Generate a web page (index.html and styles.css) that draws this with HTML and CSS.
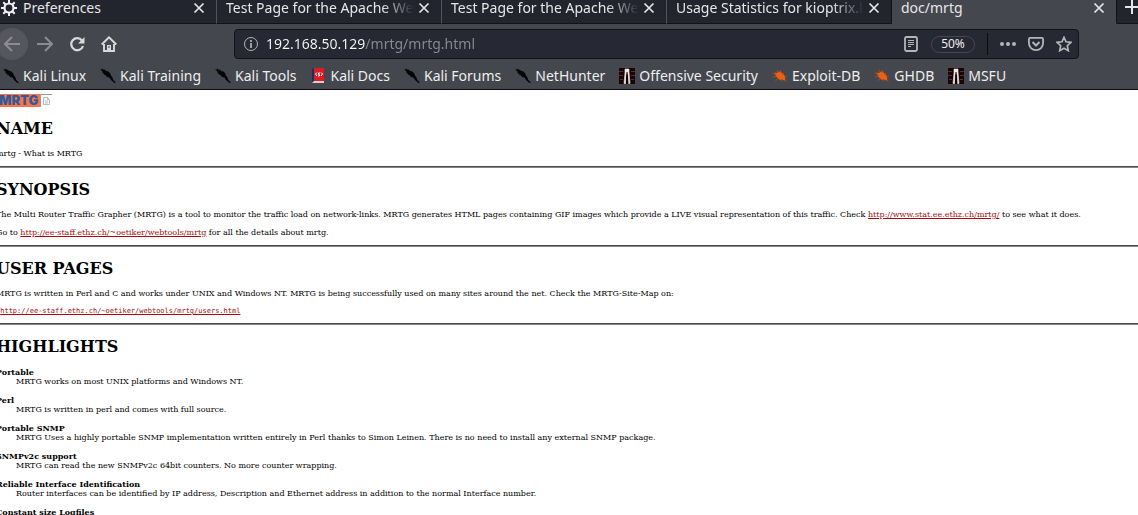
FILE: index.html
```html
<!DOCTYPE html>
<html lang="en">
<head>
<meta charset="utf-8">
<title>doc/mrtg</title>
<link rel="stylesheet" href="styles.css">
</head>
<body>
<svg class="defs" aria-hidden="true">
  <symbol id="close" viewBox="0 0 12 12"><path d="M1.500 1.500l9 9M10.500 1.500l-9 9" stroke="currentColor" stroke-width="1.700" fill="none"/></symbol>
  <symbol id="dragon" viewBox="0 0 16 16"><path d="M0 1l2 .5L2.500.5 4 2l1-.5L6 3l2 .3 2 1.700 1 2.500 1.500 2 .5 2 3 3.500h-1.500L11 12 9.500 9.500 7 9 5.500 7H4L4.500 6 2 5l1-.8z" fill="#050505"/></symbol>
  <symbol id="bug" viewBox="0 0 16 16"><path d="M2.500 4.500L5 5l1.500-1.500L9 4l2 2 1.500 1.500L13.500 11l-1 1.500-2.500-1-2 .5-2.500-2L4 8z" fill="#ee5f12"/><path d="M4.500 2l2 2.500M.5 5l4 1.500M1 9l4-.5M3.500 12.500l3-2M8.500 2v3M12 5l-2 2M12 12l2.500 1.500M9 11l.5 2.500M12.500 8l2.500.5" stroke="#c25418" stroke-width=".7" fill="none"/></symbol>
  <symbol id="offsec" viewBox="0 0 16 16"><path d="M0 0h16v16H0z" fill="#1a0405"/><path d="M0 3.500h4M0 7.500h4M12 3.500h4M12 7.500h4M1 11.500h3M12 11.500h3" stroke="#4e3435" stroke-width="1"/><path d="M6 1h4v3l1 11.500H9.500L9 6H7l-.2 9.500H5L6 5z" fill="#f1e8e4" stroke="#f1e8e4" stroke-width=".6"/><path d="M7.500 4h1l.7 11.500H7z" fill="#050505"/></symbol>
</svg>
<header class="browser">
  <div class="tabs" role="tablist">
    <div class="tab tab-first" role="tab">
      <svg class="gear" viewBox="0 0 16 16" fill="none" stroke="#f2f2f2"><circle cx="8" cy="8" r="4.500" stroke-width="2.200"/><path d="M8 0v3M8 13v3M0 8h3M13 8h3M2.300 2.300l2.200 2.200M11.500 11.500l2.200 2.200M13.700 2.300l-2.200 2.200M4.500 11.500l-2.200 2.200" stroke-width="2"/></svg>
      <span class="title">Preferences</span><button class="close" aria-label="Close tab"><svg><use href="#close"/></svg></button>
    </div>
    <div class="tab" role="tab"><span class="title fade">Test Page for the Apache Web Server</span><button class="close" aria-label="Close tab"><svg><use href="#close"/></svg></button></div>
    <div class="tab" role="tab"><span class="title fade">Test Page for the Apache Web Server</span><button class="close" aria-label="Close tab"><svg><use href="#close"/></svg></button></div>
    <div class="tab" role="tab"><span class="title fade">Usage Statistics for kioptrix.level1</span><button class="close" aria-label="Close tab"><svg><use href="#close"/></svg></button></div>
    <div class="tab active" role="tab" aria-selected="true"><span class="title">doc/mrtg</span><button class="close" aria-label="Close tab"><svg><use href="#close"/></svg></button></div>
    <button class="new-tab" aria-label="New tab"><svg viewBox="0 0 14 14"><path d="M7 0v14M0 7h14" stroke="currentColor" stroke-width="2"/></svg></button>
  </div>
  <nav class="toolbar" aria-label="Navigation">
    <div class="nav-buttons">
      <button class="back" aria-label="Back"><svg viewBox="0 0 16 16"><path d="M16 8H1M8 1L1 8l7 7"/></svg></button>
      <button class="dim" aria-label="Forward"><svg viewBox="0 0 16 16"><path d="M0 8h15M8 1l7 7-7 7"/></svg></button>
      <button aria-label="Reload"><svg viewBox="0 0 16 16"><path d="M13 4.500A6 6 0 1 0 14 10" stroke-width="2.200"/><path d="M15.500 1v6.500H9z" fill="currentColor" stroke="none"/></svg></button>
      <button aria-label="Home"><svg viewBox="0 0 16 16"><path d="M.7 8.500L8 1.300l7.300 7.200M3 8v7h10V8" stroke-width="1.900"/><path d="M6 9h4v6H6z" fill="currentColor" stroke="none"/><path d="M8 10v2" stroke="#44474d" stroke-width="1"/></svg></button>
    </div>
    <div class="urlbar">
      <svg class="info" viewBox="0 0 16 16"><circle cx="8" cy="8" r="6.500"/><path d="M8 7v5M8 4v2" stroke-width="1.700"/></svg>
      <input class="url" type="text" aria-label="Address" value="192.168.50.129/mrtg/mrtg.html">
      <button aria-label="Reader view"><svg viewBox="0 0 16 16"><rect x="2" y="1" width="12" height="14" rx="1.500" stroke-width="1.800"/><path d="M5 4.500h6M5 6.500h6M5 8.500h6M5 10.500h3" stroke-width="1"/></svg></button>
      <button class="zoom">50%</button>
      <span class="divider"></span>
      <button aria-label="Page actions"><svg viewBox="0 0 16 16"><g fill="currentColor" stroke="none"><circle cx="2" cy="8" r="2"/><circle cx="8" cy="8" r="2"/><circle cx="14" cy="8" r="2"/></g></svg></button>
      <button aria-label="Save to Pocket"><svg viewBox="0 0 16 16"><path d="M2.200 1.900h11.600q1.300 0 1.300 1.300V7a7.100 7.100 0 0 1-14.200 0V3.200q0-1.300 1.300-1.300z" stroke-width="1.800"/><path d="M4.500 6L8 9.500 11.500 6" stroke-width="2"/></svg></button>
      <button aria-label="Bookmark"><svg viewBox="0 0 16 16"><path d="M8 1.300l2 4.500 5 .5-3.700 3.400 1 5L8 12.200l-4.300 2.500 1-5L1 6.300l5-.5z" stroke-width="1.700"/></svg></button>
    </div>
  </nav>
  <div class="bookmarks">
    <a href="#"><svg><use href="#dragon"/></svg>Kali Linux</a>
    <a href="#"><svg><use href="#dragon"/></svg>Kali Training</a>
    <a href="#"><svg><use href="#dragon"/></svg>Kali Tools</a>
    <a href="#"><svg viewBox="0 0 16 16"><path d="M2 1l2-1v13l-2 2z" fill="#143260"/><path d="M4 0h10v13H4z" fill="#dc1c20"/><path d="M2 15l2-2h10v2z" fill="#d8d0d0"/><path d="M7 4.500L5.500 6 7 8M11 4.500L12.500 6 11 8M10 5H8.500v1.500h1V8H8" stroke="#fff" stroke-width="1" fill="none"/></svg>Kali Docs</a>
    <a href="#"><svg><use href="#dragon"/></svg>Kali Forums</a>
    <a href="#"><svg><use href="#dragon"/></svg>NetHunter</a>
    <a href="#"><svg><use href="#offsec"/></svg>Offensive Security</a>
    <a href="#"><svg><use href="#bug"/></svg>Exploit-DB</a>
    <a href="#"><svg><use href="#bug"/></svg>GHDB</a>
    <a href="#"><svg><use href="#offsec"/></svg>MSFU</a>
  </div>
</header>
<main class="page">
  <div class="banner"><span class="logo">MRTG</span><svg class="broken" viewBox="0 0 12 13"><path d="M.5 13V.5H12" stroke="#999" fill="none"/><path d="M3.500 3.500h4l2 2v5h-6zM5 7h3M5 9h3M7.500 3.500v2h2" stroke="#bbb" fill="none"/></svg></div>
  <h1>NAME</h1>
  <p>mrtg - What is MRTG</p>
  <hr>
  <h1>SYNOPSIS</h1>
  <p>The Multi Router Traffic Grapher (MRTG) is a tool to monitor the traffic load on network-links. MRTG generates HTML pages containing GIF images which provide a LIVE visual representation of this traffic. Check <a href="#">http://www.stat.ee.ethz.ch/mrtg/</a> to see what it does.</p>
  <p>Go to <a href="#">http://ee-staff.ethz.ch/~oetiker/webtools/mrtg</a> for all the details about mrtg.</p>
  <hr>
  <h1>USER PAGES</h1>
  <p>MRTG is written in Perl and C and works under UNIX and Windows NT. MRTG is being successfully used on many sites around the net. Check the MRTG-Site-Map on:</p>
  <pre> <a href="#">http://ee-staff.ethz.ch/~oetiker/webtools/mrtg/users.html</a></pre>
  <hr>
  <h1>HIGHLIGHTS</h1>
  <dl>
    <dt>Portable</dt><dd>MRTG works on most UNIX platforms and Windows NT.</dd>
    <dt>Perl</dt><dd>MRTG is written in perl and comes with full source.</dd>
    <dt>Portable SNMP</dt><dd>MRTG Uses a highly portable SNMP implementation written entirely in Perl thanks to Simon Leinen. There is no need to install any external SNMP package.</dd>
    <dt>SNMPv2c support</dt><dd>MRTG can read the new SNMPv2c 64bit counters. No more counter wrapping.</dd>
    <dt>Reliable Interface Identification</dt><dd>Router interfaces can be identified by IP address, Description and Ethernet address in addition to the normal Interface number.</dd>
    <dt>Constant size Logfiles</dt>
  </dl>
</main>
</body>
</html>
```
FILE: styles.css
```css
* { box-sizing: border-box; }
body {
  margin: 0;
  height: 100vh;
  overflow: hidden;
  display: flex;
  flex-direction: column;
  background: #fff;
}
.defs { display: none; }
button {
  display: flex;
  flex: none;
  align-items: center;
  justify-content: center;
  padding: 0;
  border: 0;
  background: none;
  color: inherit;
  font: inherit;
}
svg { display: block; flex: none; width: 16px; height: 16px; }

.browser {
  flex: none;
  overflow: hidden;
  background: #44474d;
  border-bottom: 1px solid #0c0c0d;
  color: #eeeeef;
  font: 14px/20px "Noto Sans", sans-serif;
}
.tabs {
  display: grid;
  grid-template: 24px / 217fr repeat(4, 225fr) 21px;
  background: #22242e;
  color: #e6e6e8;
}
.tab {
  display: flex;
  min-width: 0;
  gap: 4px;
  padding: 0 11px 8px 9px;
  align-items: center;
  border-bottom: 1px solid #111319;
  border-right: 1px solid #50535a;
}
.tab-first { padding-left: 1px; }
.tab:nth-child(4) { border-right-color: #111319; }
.tab.active {
  background: #44474d;
  border-bottom-color: #44474d;
  border-right-color: #111319;
}
.gear { margin-right: 2px; }
.title { flex: 1; min-width: 0; overflow: hidden; white-space: nowrap; }
.fade { mask-image: linear-gradient(to left, transparent, #000 32px); }
.close svg { width: 12px; height: 12px; }
.new-tab {
  padding: 0 0 9px 8px;
  border-bottom: 1px solid #111319;
}
.new-tab svg { width: 14px; height: 14px; }

.toolbar {
  display: flex;
  align-items: center;
  height: 40px;
  padding-right: 59px;
}
.nav-buttons {
  display: flex;
  flex: none;
  align-items: center;
  gap: 16px;
  width: 234px;
  color: #d9d9da;
}
.toolbar svg { fill: none; stroke: currentColor; stroke-width: 2; }
.back {
  width: 32px;
  height: 32px;
  margin: 0 -7px 0 -4px;
  border-radius: 50%;
  background: #56575e;
  color: #8b8c91;
}
.dim { color: #8b8c91; }
.urlbar {
  display: flex;
  flex: 1;
  min-width: 0;
  align-items: center;
  gap: 12px;
  height: 30px;
  padding: 0 6px 0 8px;
  border: 1px solid #111319;
  border-radius: 4px;
  background: #262833;
  color: #b4b5b9;
}
.urlbar .info { stroke-width: 1; margin-right: -5px; }
.url {
  flex: 1;
  min-width: 0;
  padding: 0;
  border: 0;
  outline: 0;
  background: linear-gradient(to right, #f9f9fa 99px, #8a8b92 99px);
  background-clip: text;
  color: transparent;
  font: inherit;
}
.zoom {
  width: 44px;
  height: 17px;
  border: 1px solid #454850;
  border-radius: 9px;
  color: #eeeeef;
  font-size: 12px;
}
.divider { width: 1px; height: 22px; background: #0c0c0d; }

.bookmarks {
  display: flex;
  gap: 14px;
  height: 25px;
  padding: 2px 3px 3px;
  white-space: nowrap;
}
.bookmarks a {
  display: flex;
  align-items: center;
  gap: 4px;
  color: inherit;
  text-decoration: none;
}

.page {
  flex: 1;
  min-height: 0;
  overflow: hidden;
  margin-left: -4px;
  padding-top: 4px;
  color: #000;
  font: 8px/10px "DejaVu Serif", serif;
}
.banner { display: flex; padding-left: 3px; margin-bottom: 12px; }
.logo {
  height: 13px;
  padding-right: 2px;
  background: #ff7148;
  color: #2d5c9c;
  font: 900 13px/13px Inter, sans-serif;
}
.broken { width: 12px; height: 13px; }
.page h1 { margin: 0 0 10px; font-size: 16px; line-height: 20px; }
.page p { margin: 0; }
.page p + p { margin-top: 8px; }
.page pre { margin: 7px 0 0; font: 7px/10px "DejaVu Sans Mono", monospace; }
.page hr {
  height: 2px;
  margin: 7px 0 12px;
  border: 0;
  border-top: 1px solid #4c4c4c;
  background: #858585;
}
.page a { color: #a30d0d; }
.page dl, .page dd { margin: 0; }
.page dt { font-weight: bold; }
.page dl dd { margin: 0 0 8px 20px; }
```
